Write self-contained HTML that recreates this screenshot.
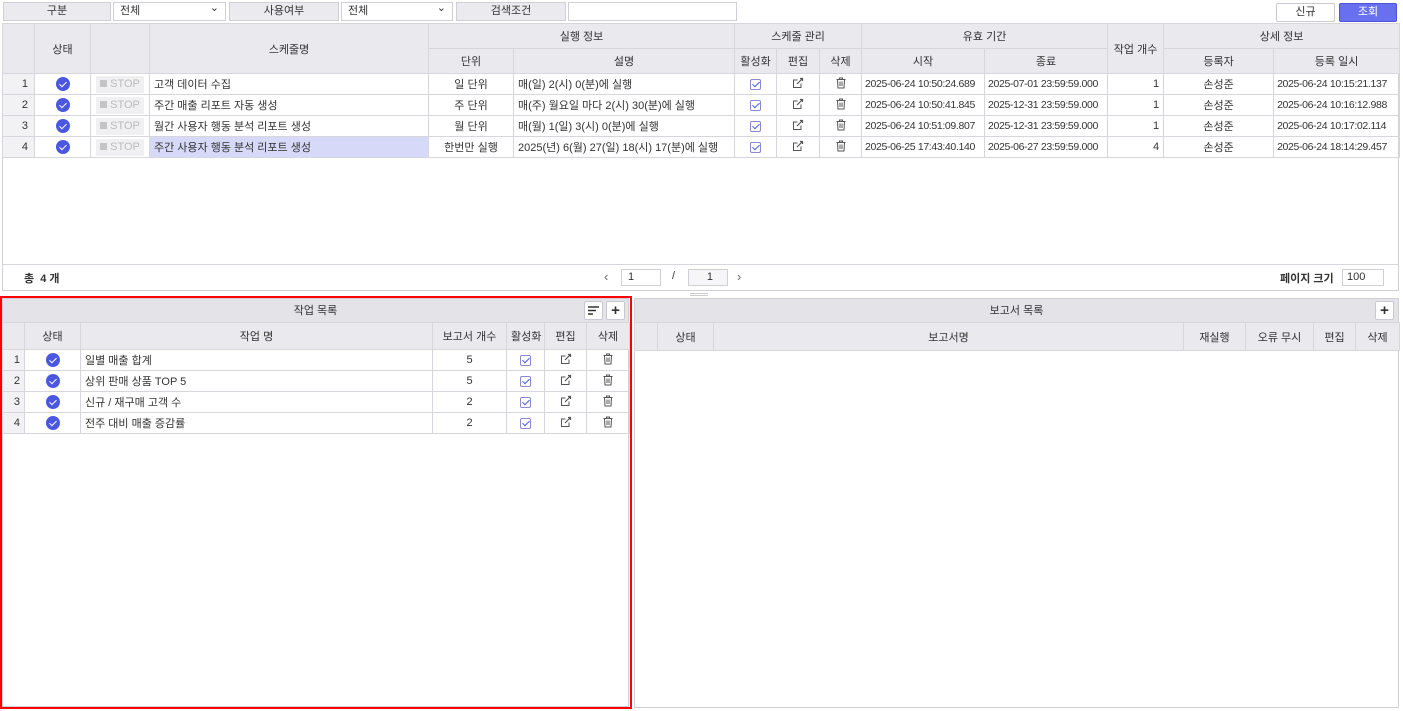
<!DOCTYPE html>
<html><head><meta charset="utf-8"><style>
*{box-sizing:border-box;margin:0;padding:0}
body{width:1403px;height:711px;background:#fff;font-family:"Liberation Sans","Noto Sans CJK KR",sans-serif;font-size:11px;color:#333;position:relative;overflow:hidden}
.a{position:absolute}
.lbl{background:#ebebef;border:1px solid #cfcfd6;text-align:center;line-height:17px;color:#333}
.sel{border:1px solid #cfcfd6;background:#fff;line-height:17px;padding-left:6px}
.sel:after{content:"⌄";position:absolute;right:6px;top:-3px;font-size:11px}
.btn{border:1px solid #c8c8d0;background:#fff;text-align:center;line-height:17px;border-radius:2px}
table{border-collapse:collapse;table-layout:fixed;position:absolute}
td,th{border:1px solid #d6d6dc;height:21px;padding:0 4px;white-space:nowrap;overflow:hidden;font-weight:normal}
th{background:#e9e9ee;text-align:center;color:#333}
td.c{text-align:center}td.r{text-align:right}
td.d{font-size:10.5px;letter-spacing:-0.35px;padding:0 3px}
td.n{background:#f2f2f5;text-align:right;padding-right:6px}
.chk{display:inline-block;width:11px;height:11px;border:1px solid #8a8ad0;border-radius:2px;position:relative;vertical-align:middle}
.chk:after{content:"";position:absolute;left:3px;top:0px;width:3px;height:6px;border:solid #4a5de0;border-width:0 1.3px 1.3px 0;transform:rotate(45deg)}
.ok{display:inline-block;width:14px;height:14px;border-radius:50%;background:#4b57e0;position:relative;vertical-align:middle}
.ok:after{content:"";position:absolute;left:5px;top:2.5px;width:3px;height:6px;border:solid #fff;border-width:0 1.6px 1.6px 0;transform:rotate(45deg)}
.stop{display:inline-block;width:48px;height:17px;background:#f0f0f2;color:#bbb;line-height:17px;text-align:center;font-size:11px}
.stop:before{content:"";display:inline-block;width:7px;height:7px;background:#c4c4c4;margin-right:3px}
.sel-row td.nm{background:#d6d9f7}
.box{border:1px solid #d0d0d8}
.ttl{background:#e3e3e8;text-align:center;line-height:24px;border-bottom:1px solid #d0d0d8}
.sb{width:19px;height:19px;border:1px solid #c8c8d0;background:#fff;border-radius:2px;text-align:center;line-height:17px;font-size:15px;font-weight:bold}
</style></head><body>
<svg width="0" height="0" style="position:absolute"><defs>
<symbol id="ed" viewBox="0 0 12 12"><path d="M9 6.5V10.5H1.5V3H5.5" fill="none" stroke="#555" stroke-width="1"/><path d="M5 7L10.5 1.5M8 1.5H10.5V4" fill="none" stroke="#555" stroke-width="1.2"/></symbol>
<symbol id="tr" viewBox="0 0 12 12"><path d="M1.5 2.5H10.5M4.5 2.5V1H7.5V2.5M2.5 2.5L3 11H9L9.5 2.5M5 4.5V9M7 4.5V9" fill="none" stroke="#555" stroke-width="1"/></symbol>
</defs></svg>

<div class="a lbl" style="left:3px;top:2px;width:108px;height:19px">구분</div>
<div class="a sel" style="left:113px;top:2px;width:113px;height:19px">전체</div>
<div class="a lbl" style="left:229px;top:2px;width:110px;height:19px">사용여부</div>
<div class="a sel" style="left:341px;top:2px;width:112px;height:19px">전체</div>
<div class="a lbl" style="left:456px;top:2px;width:110px;height:19px">검색조건</div>
<div class="a" style="left:568px;top:2px;width:169px;height:19px;border:1px solid #cfcfd6"></div>
<div class="a btn" style="left:1276px;top:3px;width:59px;height:19px">신규</div>
<div class="a btn" style="left:1339px;top:3px;width:58px;height:19px;background:#6870f0;border-color:#4b55d8;color:#fff">조회</div>

<div class="a box" style="left:2px;top:23px;width:1397px;height:268px"></div>
<table style="left:2px;top:23px;width:1397px">
<colgroup><col style="width:32px"><col style="width:56px"><col style="width:59px"><col style="width:279px"><col style="width:85px"><col style="width:221px"><col style="width:42px"><col style="width:43px"><col style="width:42px"><col style="width:123px"><col style="width:123px"><col style="width:56px"><col style="width:110px"><col style="width:126px"></colgroup>
<tr style="height:25px"><th rowspan="2"></th><th rowspan="2">상태</th><th rowspan="2"></th><th rowspan="2">스케줄명</th><th colspan="2">실행 정보</th><th colspan="3">스케줄 관리</th><th colspan="2">유효 기간</th><th rowspan="2">작업 개수</th><th colspan="2">상세 정보</th></tr>
<tr style="height:25px"><th>단위</th><th>설명</th><th>활성화</th><th>편집</th><th>삭제</th><th>시작</th><th>종료</th><th>등록자</th><th>등록 일시</th></tr>
<tr><td class="n">1</td><td class="c"><span class="ok"></span></td><td class="c"><span class="stop">STOP</span></td><td class="nm">고객 데이터 수집</td><td class="c">일 단위</td><td>매(일) 2(시) 0(분)에 실행</td><td class="c"><span class="chk"></span></td><td class="c"><svg width="12" height="12"><use href="#ed"/></svg></td><td class="c"><svg width="12" height="12"><use href="#tr"/></svg></td><td class="d">2025-06-24 10:50:24.689</td><td class="d">2025-07-01 23:59:59.000</td><td class="r">1</td><td class="c">손성준</td><td class="d">2025-06-24 10:15:21.137</td></tr>
<tr><td class="n">2</td><td class="c"><span class="ok"></span></td><td class="c"><span class="stop">STOP</span></td><td class="nm">주간 매출 리포트 자동 생성</td><td class="c">주 단위</td><td>매(주) 월요일 마다 2(시) 30(분)에 실행</td><td class="c"><span class="chk"></span></td><td class="c"><svg width="12" height="12"><use href="#ed"/></svg></td><td class="c"><svg width="12" height="12"><use href="#tr"/></svg></td><td class="d">2025-06-24 10:50:41.845</td><td class="d">2025-12-31 23:59:59.000</td><td class="r">1</td><td class="c">손성준</td><td class="d">2025-06-24 10:16:12.988</td></tr>
<tr><td class="n">3</td><td class="c"><span class="ok"></span></td><td class="c"><span class="stop">STOP</span></td><td class="nm">월간 사용자 행동 분석 리포트 생성</td><td class="c">월 단위</td><td>매(월) 1(일) 3(시) 0(분)에 실행</td><td class="c"><span class="chk"></span></td><td class="c"><svg width="12" height="12"><use href="#ed"/></svg></td><td class="c"><svg width="12" height="12"><use href="#tr"/></svg></td><td class="d">2025-06-24 10:51:09.807</td><td class="d">2025-12-31 23:59:59.000</td><td class="r">1</td><td class="c">손성준</td><td class="d">2025-06-24 10:17:02.114</td></tr>
<tr class="sel-row"><td class="n">4</td><td class="c"><span class="ok"></span></td><td class="c"><span class="stop">STOP</span></td><td class="nm">주간 사용자 행동 분석 리포트 생성</td><td class="c">한번만 실행</td><td>2025(년) 6(월) 27(일) 18(시) 17(분)에 실행</td><td class="c"><span class="chk"></span></td><td class="c"><svg width="12" height="12"><use href="#ed"/></svg></td><td class="c"><svg width="12" height="12"><use href="#tr"/></svg></td><td class="d">2025-06-25 17:43:40.140</td><td class="d">2025-06-27 23:59:59.000</td><td class="r">4</td><td class="c">손성준</td><td class="d">2025-06-24 18:14:29.457</td></tr>
</table>
<div class="a" style="left:3px;top:264px;width:1395px;height:1px;background:#d6d6dc"></div>
<div class="a" style="left:24px;top:270px;font-weight:bold">총&nbsp; 4 개</div>
<div class="a" style="left:604px;top:269px;color:#666;font-size:13px">‹</div>
<div class="a" style="left:621px;top:269px;width:40px;height:17px;border:1px solid #cfcfd6;line-height:15px;padding-left:6px">1</div>
<div class="a" style="left:672px;top:270px">/</div>
<div class="a" style="left:688px;top:269px;width:40px;height:17px;border:1px solid #cfcfd6;background:#f6f6f8;line-height:15px;text-align:right;padding-right:14px">1</div>
<div class="a" style="left:737px;top:269px;color:#666;font-size:13px">›</div>
<div class="a" style="left:1280px;top:270px;font-weight:bold">페이지 크기</div>
<div class="a" style="left:1342px;top:269px;width:42px;height:17px;border:1px solid #cfcfd6;line-height:15px;padding-left:4px">100</div>
<div class="a" style="left:690px;top:293px;width:18px;height:3px;border-top:1px solid #ccc;border-bottom:1px solid #ccc"></div>

<div class="a box" style="left:2px;top:298px;width:627px;height:409px">
<div class="ttl" style="height:24px">작업 목록</div></div>
<div class="a sb" style="left:584px;top:301px;font-size:12px"><svg width="11" height="9" style="margin-top:4px"><path d="M0 1H11M0 4.5H8M0 8H5" stroke="#333" stroke-width="1.4"/></svg></div>
<div class="a sb" style="left:606px;top:301px">+</div>
<table style="left:2px;top:322px;width:627px">
<colgroup><col style="width:22px"><col style="width:56px"><col style="width:352px"><col style="width:74px"><col style="width:38px"><col style="width:42px"><col style="width:43px"></colgroup>
<tr style="height:27px"><th></th><th>상태</th><th>작업 명</th><th>보고서 개수</th><th>활성화</th><th>편집</th><th>삭제</th></tr>
<tr style="height:21px"><td class="n" style="padding-right:4px">1</td><td class="c"><span class="ok"></span></td><td>일별 매출 합계</td><td class="c">5</td><td class="c"><span class="chk"></span></td><td class="c"><svg width="12" height="12"><use href="#ed"/></svg></td><td class="c"><svg width="12" height="12"><use href="#tr"/></svg></td></tr>
<tr style="height:20px"><td class="n" style="padding-right:4px">2</td><td class="c"><span class="ok"></span></td><td>상위 판매 상품 TOP 5</td><td class="c">5</td><td class="c"><span class="chk"></span></td><td class="c"><svg width="12" height="12"><use href="#ed"/></svg></td><td class="c"><svg width="12" height="12"><use href="#tr"/></svg></td></tr>
<tr style="height:20px"><td class="n" style="padding-right:4px">3</td><td class="c"><span class="ok"></span></td><td>신규 / 재구매 고객 수</td><td class="c">2</td><td class="c"><span class="chk"></span></td><td class="c"><svg width="12" height="12"><use href="#ed"/></svg></td><td class="c"><svg width="12" height="12"><use href="#tr"/></svg></td></tr>
<tr style="height:21px"><td class="n" style="padding-right:4px">4</td><td class="c"><span class="ok"></span></td><td>전주 대비 매출 증감률</td><td class="c">2</td><td class="c"><span class="chk"></span></td><td class="c"><svg width="12" height="12"><use href="#ed"/></svg></td><td class="c"><svg width="12" height="12"><use href="#tr"/></svg></td></tr>
</table>
<div class="a" style="left:0;top:296px;width:632px;height:413px;border:2px solid #f00"></div>

<div class="a box" style="left:634px;top:298px;width:765px;height:410px">
<div class="ttl" style="height:24px">보고서 목록</div></div>
<div class="a sb" style="left:1375px;top:301px">+</div>
<table style="left:634px;top:322px;width:765px">
<colgroup><col style="width:23px"><col style="width:56px"><col style="width:470px"><col style="width:62px"><col style="width:68px"><col style="width:42px"><col style="width:44px"></colgroup>
<tr style="height:28px"><th></th><th>상태</th><th>보고서명</th><th>재실행</th><th>오류 무시</th><th>편집</th><th>삭제</th></tr>
</table>
</body></html>
